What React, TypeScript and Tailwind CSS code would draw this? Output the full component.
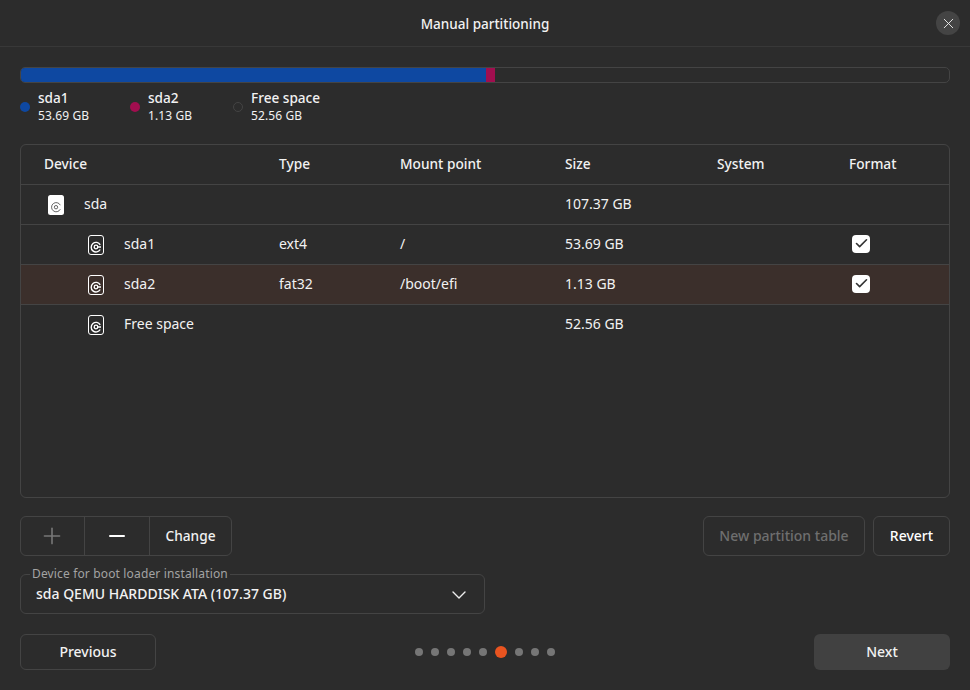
import React from 'react';
import { X, Plus, Minus, ChevronDown, Check } from 'lucide-react';

const font = 'font-["Noto_Sans",sans-serif]';

const legend = [
    { name: 'sda1', size: '53.69 GB', dot: 'bg-[#0e48a1]', width: 'w-[110px]' },
    { name: 'sda2', size: '1.13 GB', dot: 'bg-[#a10e4f]', width: 'w-[103px]' },
    { name: 'Free space', size: '52.56 GB', dot: 'border border-[#444444]', width: 'w-[110px]' },
];

const rows = [
    { device: 'sda', type: '', mount: '', size: '107.37 GB', format: false, level: 0 },
    { device: 'sda1', type: 'ext4', mount: '/', size: '53.69 GB', format: true, level: 1 },
    { device: 'sda2', type: 'fat32', mount: '/boot/efi', size: '1.13 GB', format: true, level: 1, selected: true },
    { device: 'Free space', type: '', mount: '', size: '52.56 GB', format: false, level: 1 },
];

const gridCols = 'grid grid-cols-[235px_121px_165px_152px_132px_1fr] items-center';

const DiskIcon: React.FC<{ filled: boolean }> = ({ filled }) => (
    <svg width="16" height="20" viewBox="0 0 16 20" fill="none" className="shrink-0">
        {filled ? (
            <>
                <rect x="0" y="0" width="16" height="20" rx="2.5" fill="#ffffff" />
                <path d="M12.3 14.2 A 4.6 4.6 0 1 1 12.3 10.2" stroke="#666666" strokeWidth="1" />
                <circle cx="8" cy="12.2" r="1.7" stroke="#666666" strokeWidth="1" />
            </>
        ) : (
            <>
                <rect x="0.5" y="0.5" width="15" height="19" rx="2.5" stroke="#ffffff" strokeWidth="1" />
                <path d="M12.2 14.5 A 4.8 4.8 0 1 1 12.2 9.8" stroke="#ffffff" strokeWidth="1.4" />
                <circle cx="8" cy="12" r="1.8" stroke="#ffffff" strokeWidth="1.3" />
                <path d="M9.8 12 H13" stroke="#ffffff" strokeWidth="1.3" />
            </>
        )}
    </svg>
);

const App: React.FC = () => {
    const dots = [0, 1, 2, 3, 4, 5, 6, 7, 8];

    return (
        <div className={`w-[970px] h-[690px] bg-[#2c2c2c] text-[#f2f2f2] flex flex-col overflow-hidden ${font}`}>
            {/* Title bar */}
            <header className="h-[47px] shrink-0 border-b border-[#383838] flex items-center justify-center relative">
                <span className="text-[13.5px] font-medium pt-[2px]">Manual partitioning</span>
                <button className="absolute right-[10px] top-[11px] w-6 h-6 rounded-full bg-[#444444] flex items-center justify-center">
                    <X size={17} strokeWidth={1.3} className="text-[#eeeeee]" />
                </button>
            </header>

            <main className="flex-grow flex flex-col px-5 pt-5">
                {/* Usage bar */}
                <div className="h-4 rounded-[5px] border border-[#444444] overflow-hidden flex">
                    <div className="w-[465px] bg-[#0e48a1]"></div>
                    <div className="w-[9px] bg-[#a10e4f]"></div>
                </div>

                {/* Legend */}
                <div className="flex mt-[5px] h-[36px]">
                    {legend.map((item) => (
                        <div key={item.name} className={`flex items-center ${item.width}`}>
                            <span className={`w-[10px] h-[10px] rounded-full shrink-0 mt-[2px] ${item.dot}`}></span>
                            <div className="ml-2 flex flex-col">
                                <span className="text-[13.6px] leading-[20px] font-medium">{item.name}</span>
                                <span className="text-[12px] leading-[16px] tracking-[0.1px]">{item.size}</span>
                            </div>
                        </div>
                    ))}
                </div>

                {/* Partition table */}
                <div className="mt-5 h-[354px] rounded-[6px] border border-[#444444] overflow-hidden">
                    <div className={`${gridCols} h-[39px] px-[23px] text-[13.7px] font-medium`}>
                        <span>Device</span>
                        <span>Type</span>
                        <span>Mount point</span>
                        <span>Size</span>
                        <span>System</span>
                        <span>Format</span>
                    </div>
                    {rows.map((row) => (
                        <div
                            key={row.device}
                            className={`${gridCols} h-[40px] px-[23px] text-[14px] border-t border-[#444444] ${row.selected ? 'bg-[#3b2f2b]' : ''}`}
                        >
                            <div className={`flex items-center gap-5 ${row.level ? 'pl-[44px]' : 'pl-[4px]'}`}>
                                <DiskIcon filled={row.level === 0} />
                                <span className="pb-[2px]">{row.device}</span>
                            </div>
                            <span className="pb-[2px]">{row.type}</span>
                            <span className="pb-[2px]">{row.mount}</span>
                            <span className="pb-[2px]">{row.size}</span>
                            <span></span>
                            <div className="pl-[3px] pb-[2px]">
                                {row.format && (
                                    <span className="w-[18px] h-[18px] rounded-[4px] bg-white flex items-center justify-center">
                                        <Check size={15} strokeWidth={2.6} className="text-[#333333]" />
                                    </span>
                                )}
                            </div>
                        </div>
                    ))}
                </div>

                {/* Table actions */}
                <div className="mt-[18px] flex justify-between h-[40px]">
                    <div className="flex rounded-[6px] border border-[#444444]">
                        <button className="w-[64px] flex items-center justify-center border-r border-[#444444] pr-[2px]">
                            <Plus size={26} strokeWidth={1.5} className="text-[#777777]" />
                        </button>
                        <button className="w-[65px] flex items-center justify-center border-r border-[#444444]">
                            <Minus size={24} strokeWidth={2} className="text-white" />
                        </button>
                        <button className="w-[81px] text-[13.7px] font-medium">Change</button>
                    </div>
                    <div className="flex gap-2">
                        <button className="w-[162px] rounded-[6px] border border-[#444444] text-[14px] font-medium text-[#6f6f6f] pb-[2px]">New partition table</button>
                        <button className="w-[77px] rounded-[6px] border border-[#444444] text-[14px] font-medium text-white pb-[2px]">Revert</button>
                    </div>
                </div>

                {/* Boot loader select */}
                <fieldset className="mt-[11px] w-[465px] h-[47px] rounded-[6px] border border-[#444444] px-[15px]">
                    <legend className="px-[2px] -ml-[6px] text-[12px] leading-[14px] tracking-[0.15px] text-[#a3a3a3]">Device for boot loader installation</legend>
                    <div className="flex items-center justify-between h-[26px]">
                        <span className="text-[14px] font-medium pb-[2px]">sda QEMU HARDDISK ATA (107.37 GB)</span>
                        <ChevronDown size={24} strokeWidth={1.4} className="text-[#eeeeee] -mr-[2px] mt-[1px]" />
                    </div>
                </fieldset>

                {/* Footer */}
                <div className="mt-[20px] h-[36px] flex items-center justify-between">
                    <button className="w-[136px] h-full rounded-[6px] border border-[#444444] text-[14px] font-medium pb-[2px]">Previous</button>
                    <div className="flex items-center gap-2">
                        {dots.map((d) => (
                            <span
                                key={d}
                                className={d === 5 ? 'w-3 h-3 rounded-full bg-[#e95420]' : 'w-2 h-2 rounded-full bg-[#767676]'}
                            ></span>
                        ))}
                    </div>
                    <button className="w-[136px] h-full rounded-[6px] bg-[#414141] text-[14px] font-medium pb-[2px]">Next</button>
                </div>
            </main>
        </div>
    );
};

export default App;
